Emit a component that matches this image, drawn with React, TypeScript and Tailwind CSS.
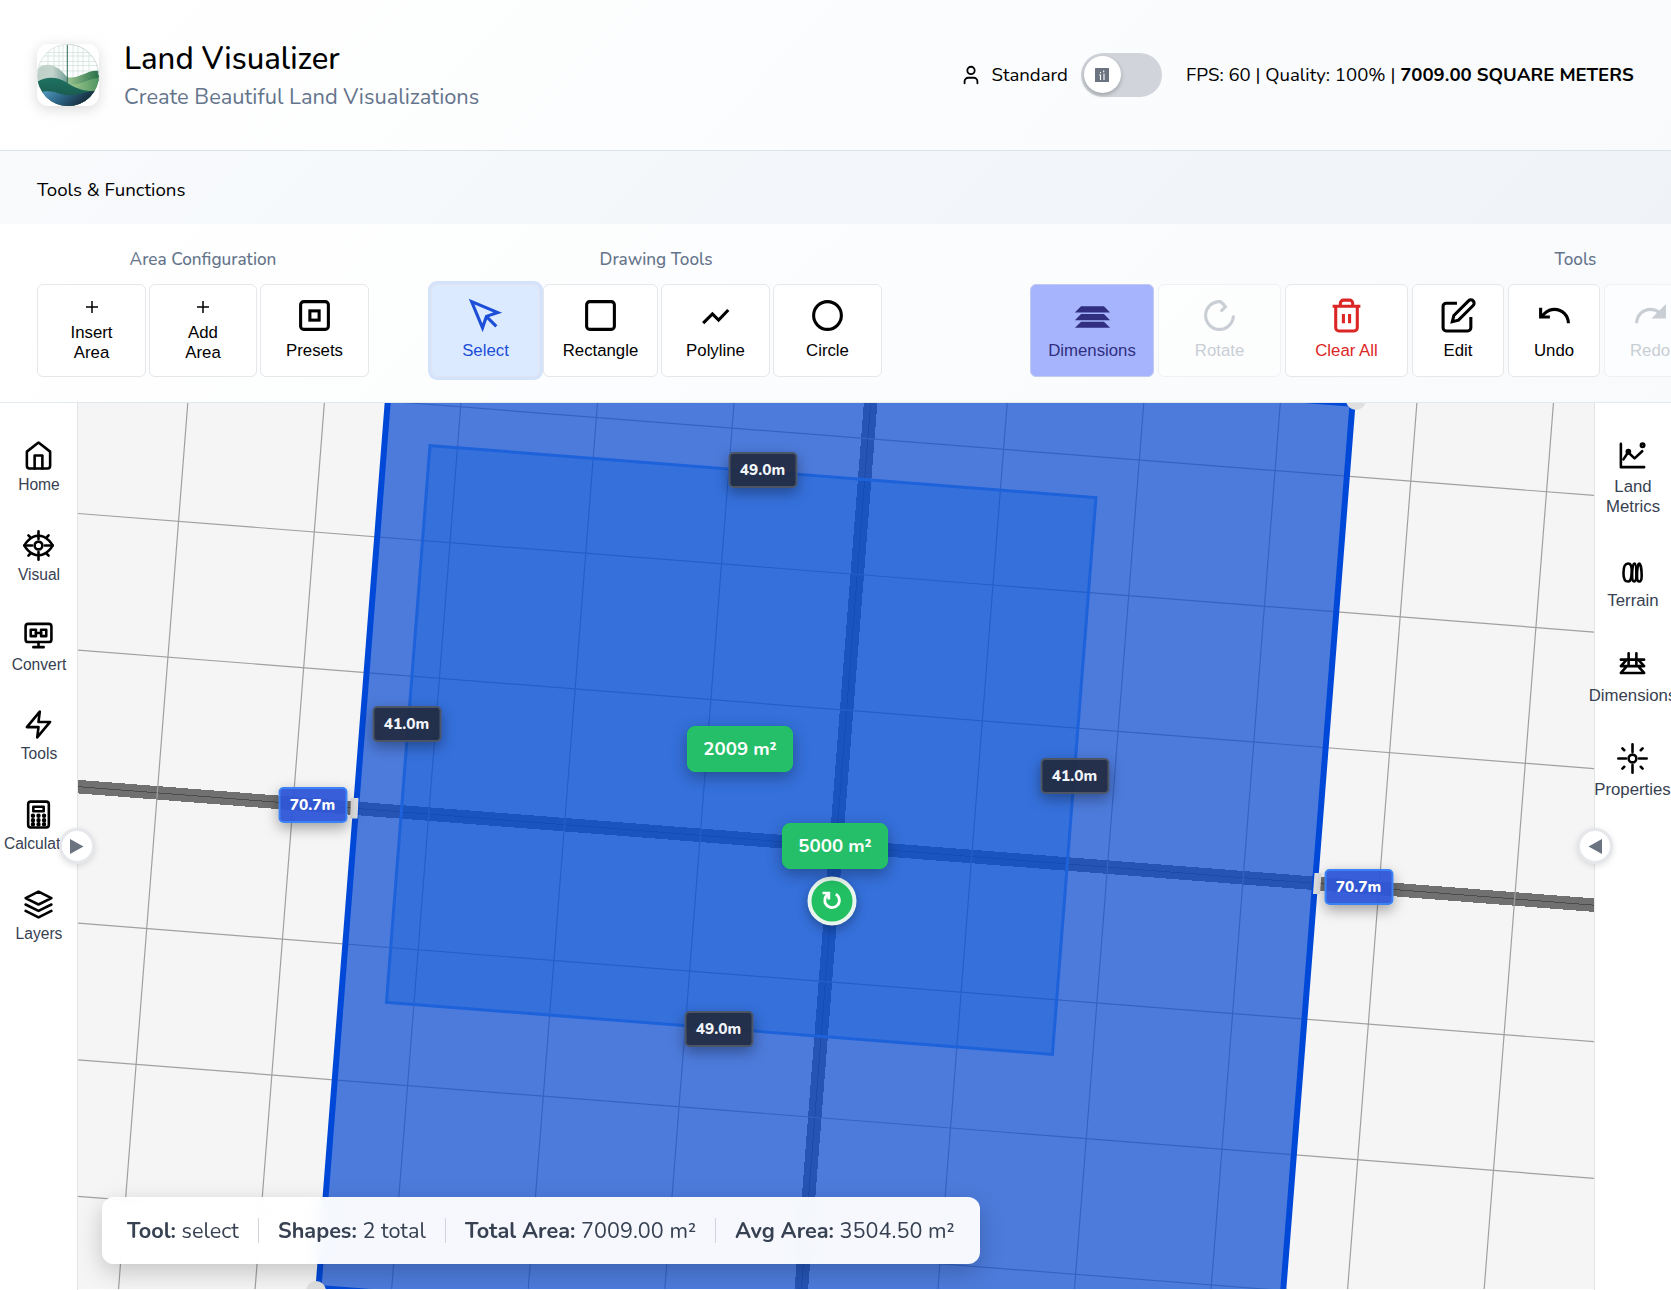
import React from "react";

type IconProps = { size?: number; className?: string; children: React.ReactNode; round?: boolean };

function Icon({ size = 37, className = "", children, round = false }: IconProps) {
  return (
    <svg
      width={size}
      height={size}
      viewBox="0 0 24 24"
      fill="none"
      stroke="currentColor"
      strokeWidth={2}
      strokeLinecap={round ? "round" : "butt"}
      strokeLinejoin={round ? "round" : "miter"}
      className={"shrink-0 " + className}
    >
      {children}
    </svg>
  );
}

function Logo() {
  return (
    <div className="h-[62px] w-[62px] overflow-hidden rounded-[11px] bg-white shadow-[0_3px_14px_rgba(0,0,0,0.15)]">
      <svg width="62" height="62" viewBox="0 0 62 62">
        <defs>
          <clipPath id="disc"><circle cx="31" cy="31" r="31" /></clipPath>
          <linearGradient id="water" x1="0" x2="1" y1="0" y2="0.3">
            <stop offset="0" stopColor="#5aa9cf" />
            <stop offset="0.5" stopColor="#2d6485" />
            <stop offset="1" stopColor="#13212f" />
          </linearGradient>
          <linearGradient id="mist" x1="0" x2="1"><stop offset="0" stopColor="#bccfc6" /><stop offset="0.5" stopColor="#c3d4cd" /><stop offset="1" stopColor="#6f9c93" /></linearGradient>
          <linearGradient id="meadow" x1="0" x2="1"><stop offset="0" stopColor="#9cc491" /><stop offset="1" stopColor="#256f48" /></linearGradient>
          <linearGradient id="field" x1="0" x2="1"><stop offset="0" stopColor="#a3cb92" /><stop offset="1" stopColor="#4f9460" /></linearGradient>
          <linearGradient id="hill" x1="0" x2="0" y1="0" y2="1"><stop offset="0" stopColor="#1f7262" /><stop offset="1" stopColor="#164f45" /></linearGradient>
        </defs>
        <g clipPath="url(#disc)">
          <rect width="62" height="62" fill="#fdfefe" />
          <path d="M0 8.5H62M0 12H62M0 17.5H62M0 21.5H62M0 27H62M11 0V30M17 0V30M22 0V30M26 0V30M36 0V35M41 0V35M46 0V35M52 0V35" stroke="#cfe0da" strokeWidth="0.7" />
          <path d="M30 33C42 36 50 25 62 27V62H30Z" fill="url(#meadow)" />
          <path d="M32 41C44 41 50 35 62 34V62H32Z" fill="url(#field)" />
          <path d="M0 25C8 19 15 20 22 25C26 28 28 31 31 34V44H0Z" fill="url(#mist)" />
          <path d="M0 38C10 32 20 33 29 38C38 44 46 48 62 47V62H0Z" fill="url(#hill)" />
          <path d="M0 49C10 46 16 47 24 50C36 54 46 48 62 46V62H0Z" fill="url(#water)" />
          <path d="M30.3 0V39" stroke="#2b6a56" strokeWidth="1" />
        </g>
        <path d="M31 0.4A30.6 30.6 0 0 1 61.6 31" fill="none" stroke="#c9d6d2" strokeWidth="0.9" />
        <path d="M31 0.4A30.6 30.6 0 0 0 0.4 31" fill="none" stroke="#dbe5e1" strokeWidth="0.9" />
      </svg>
    </div>
  );
}

function Header() {
  return (
    <header className="flex h-[151px] items-center justify-between border-b border-[#dde3eb] bg-[linear-gradient(135deg,#ffffff,#f8fafc)] px-[37px] pb-px">
      <div className="flex items-center">
        <Logo />
        <div className="ml-[25px] flex flex-col">
          <h1 className="text-[31.1px] font-medium leading-[38px] text-black"><span className="inline-block translate-y-px">Land Visualizer</span></h1>
          <p className="mt-[6px] text-[21.85px] leading-[28px] text-[#64748b]">Create Beautiful Land Visualizations</p>
        </div>
      </div>
      <div className="flex items-center text-[18.6px] text-black">
        <Icon size={22} round>
          <path d="M19 21v-2a4 4 0 0 0-4-4H9a4 4 0 0 0-4 4v2" />
          <circle cx="12" cy="7" r="4" />
        </Icon>
        <span className="ml-[9.5px] w-[77.5px] whitespace-nowrap pt-[2px]">Standard</span>
        <div className="ml-[12px] flex h-[44px] w-[81px] items-center rounded-full bg-[#d1d5db] px-[3px]">
          <div className="flex h-[37px] w-[37px] items-center justify-center rounded-full bg-white shadow-[0_2px_4px_rgba(0,0,0,0.25)]">
            <svg width="14" height="14" viewBox="0 0 14 14" className="-translate-x-px">
              <rect width="14" height="14" rx="0.5" fill="#6b7280" />
              <path d="M5.5 6.5V12M9 5.5V12M5.5 4V5.2M8.7 2.5V4.2M4.2 7H5.5" stroke="#fff" strokeWidth="1.1" />
            </svg>
          </div>
        </div>
        <span className="ml-[24px] w-[448px] whitespace-nowrap pt-[2px]">
          FPS: 60 | Quality: 100% | <b className="font-bold">7009.00 SQUARE METERS</b>
        </span>
      </div>
    </header>
  );
}

function ToolButton({ label, width, children, tone = "text-black bg-white border-[#e5e7eb]" }: { label: React.ReactNode; width: string; children: React.ReactNode; tone?: string }) {
  return (
    <button className={"flex h-[93px] shrink-0 flex-col items-center justify-center rounded-[6px] border pb-[3px] font-['Liberation_Sans',sans-serif] text-[16.8px] leading-[20px] " + width + " " + tone}>
      {children}
      <span className="mt-[7px]">{label}</span>
    </button>
  );
}

function PlusButton({ word, width }: { word: string; width: string }) {
  return (
    <button className={"flex h-[93px] shrink-0 flex-col items-center rounded-[6px] border border-[#e5e7eb] bg-white pt-[16px] font-['Liberation_Sans',sans-serif] text-[16.8px] leading-[20px] text-black " + width}>
      <svg width="12" height="12" viewBox="0 0 12 12" className="mb-[10px]">
        <path d="M6 0V12M0 6H12" stroke="#000" strokeWidth="1.5" />
      </svg>
      <span>{word}</span>
      <span>Area</span>
    </button>
  );
}

function Group({ title, className, children }: { title: string; className: string; children: React.ReactNode }) {
  return (
    <section className={"flex shrink-0 flex-col " + className}>
      <h3 className="h-[25px] pt-px text-center text-[17.2px] font-medium leading-[24px] text-[#64748b]">{title}</h3>
      <div className="mt-[12px] flex">{children}</div>
    </section>
  );
}

const FADED = "text-[#c9ced5] bg-white/50 border-[#eff1f4]";

function Ribbon() {
  return (
    <div className="flex h-[179px] overflow-hidden border-b border-[#e2e8f0] bg-[linear-gradient(135deg,#ffffff,#f8fafc)] pl-[37px] pt-[23px]">
      <Group title="Area Configuration" className="w-[332px]">
        <div className="flex gap-[3px]">
          <PlusButton word="Insert" width="w-[109px]" />
          <PlusButton word="Add" width="w-[108px]" />
          <ToolButton label="Presets" width="w-[109px]">
            <Icon><rect x="3" y="3" width="18" height="18" rx="2" /><rect x="9" y="9" width="6" height="6" /></Icon>
          </ToolButton>
        </div>
      </Group>
      <Group title="Drawing Tools" className="ml-[61px] w-[452px]">
        <div className="flex gap-[3px]">
          <ToolButton label="Select" width="ml-px w-[109px]" tone="text-[#1d4ed8] bg-[#dbeafe] border-[#dfe5f0] shadow-[0_0_0_3px_#d5e2fc]">
            <Icon><path d="M3 3l7.07 16.97 2.51-7.39 7.39-2.51L3 3z" /><path d="M13 13l6 6" /></Icon>
          </ToolButton>
          <ToolButton label="Rectangle" width="w-[115px]">
            <Icon><rect x="3" y="3" width="18" height="18" rx="2" /></Icon>
          </ToolButton>
          <ToolButton label="Polyline" width="w-[109px]">
            <Icon><path d="M4 17L10 11L14 15L20.3 8.4" /></Icon>
          </ToolButton>
          <ToolButton label="Circle" width="w-[109px]">
            <Icon><circle cx="12" cy="12" r="9" /></Icon>
          </ToolButton>
        </div>
      </Group>
      <Group title="Tools" className="ml-[148px] w-[1091px]">
        <div className="flex gap-[4px]">
          <ToolButton label="Dimensions" width="w-[124px]" tone="text-[#312e81] bg-[#a5b4fc] border-[#c3caf0]">
            <Icon><path d="M3 9l2-2h14l2 2zM3 14l2-2h14l2 2zM3 19l2-2h14l2 2z" /></Icon>
          </ToolButton>
          <ToolButton label="Rotate" width="w-[123px]" tone={FADED}>
            <Icon><path d="M21 12a9 9 0 1 1-9-9c1 0 2.3 1.2 3.8 3.4l-3 3" /></Icon>
          </ToolButton>
          <ToolButton label="Clear All" width="w-[123px]" tone="text-[#dc2626] bg-white border-[#e5e7eb]">
            <Icon><path d="M3 6h18M19 6v14a2 2 0 0 1-2 2H7a2 2 0 0 1-2-2V6M8 6V4a2 2 0 0 1 2-2h4a2 2 0 0 1 2 2v2M10 11v6M14 11v6" /></Icon>
          </ToolButton>
          <ToolButton label="Edit" width="w-[92px]">
            <Icon><path d="M11 4H4a2 2 0 0 0-2 2v14a2 2 0 0 0 2 2h14a2 2 0 0 0 2-2v-7" /><path d="M18.5 2.5a2.121 2.121 0 0 1 3 3L12 15l-4 1 1-4 9.5-9.5z" /></Icon>
          </ToolButton>
          <ToolButton label="Undo" width="w-[92px]">
            <Icon><path d="M3 7v6h6" /><path d="M21 17a9 9 0 0 0-9-9 9 9 0 0 0-6 2.3L3 13" /></Icon>
          </ToolButton>
          <ToolButton label="Redo" width="w-[92px]" tone={FADED}>
            <Icon><path d="M21 7v6h-6z" fill="currentColor" /><path d="M3 17a9 9 0 0 1 9-9 9 9 0 0 1 6 2.3L21 13" /></Icon>
          </ToolButton>
        </div>
      </Group>
    </div>
  );
}

const leftItems: { label: string; icon: React.ReactNode }[] = [
  { label: "Home", icon: <><path d="M3 9l9-7 9 7v11a2 2 0 0 1-2 2H5a2 2 0 0 1-2-2z" /><path d="M9 22V12h6v10" /></> },
  { label: "Visual", icon: <><path d="M1 12s4-7.5 11-7.5S23 12 23 12s-4 7.5-11 7.5S1 12 1 12z" /><circle cx="12" cy="12" r="3" /><path d="M12 1v6M12 17v6M1 12h6M17 12h6M4.2 4.2l1.4 1.4M18.4 18.4l1.4 1.4M4.2 19.8l1.4-1.4M18.4 5.6l1.4-1.4" /></> },
  { label: "Convert", icon: <><rect x="2" y="3" width="20" height="14" rx="2" /><path d="M12 17v4M8 21h8M10 10h4" /><rect x="6" y="7.5" width="4" height="5" /><rect x="14" y="7.5" width="4" height="5" /></> },
  { label: "Tools", icon: <path d="M13 2L3 14h9l-1 8 10-12h-9l1-8z" /> },
  { label: "Calculator", icon: <><rect x="4" y="2" width="16" height="20" rx="2" /><rect x="8" y="6" width="8" height="3.5" /><path strokeWidth="3.4" d="M7.7 13h.01M12 13h.01M16.3 13h.01M7.7 16.5h.01M12 16.5h.01M16.3 16.5h.01M7.7 19.6h.01M12 19.6h.01M16.3 19.6h.01" /></> },
  { label: "Layers", icon: <path d="M12 2L2 7l10 5 10-5-10-5zM2 17l10 5 10-5M2 12l10 5 10-5" /> },
];

function LeftBar() {
  return (
    <aside className="relative z-10 flex w-[78px] shrink-0 flex-col items-center border-r border-[#e2e4e8] bg-white pt-[37px] font-['Liberation_Sans',sans-serif] text-[15.6px] text-[#374151]">
      {leftItems.map((item) => (
        <button key={item.label} className="flex h-[89.75px] w-full flex-col items-center">
          <Icon size={31} round className="text-black">{item.icon}</Icon>
          <span className="mt-[5px] translate-x-[0.5px] leading-[18px]">{item.label}</span>
        </button>
      ))}
      <button className="absolute -right-[18px] top-[425px] flex h-[36px] w-[36px] items-center justify-center rounded-full border-[3px] border-[#e5e7eb] bg-white shadow-[0_2px_6px_rgba(0,0,0,0.12)]">
        <svg width="14" height="15" viewBox="0 0 14 15"><path d="M0 0L13.5 7.5L0 15Z" fill="#6b7280" /></svg>
      </button>
    </aside>
  );
}

function RightBar() {
  const item = "flex w-[110px] flex-col items-center";
  return (
    <aside className="relative z-10 flex w-[77px] shrink-0 flex-col items-center border-l border-[#e2e4e8] bg-white pt-[37px] font-['Liberation_Sans',sans-serif] text-[16.8px] leading-[20px] text-[#374151]">
      <button className={item + " h-[108px]"}>
        <Icon size={31} round className="-translate-x-px text-black">
          <path d="M3 3v18h18" /><path d="M5 15l3.6-5.5 5 4.7 5.9-5.5" /><circle cx="8.8" cy="9" r="1.2" /><circle cx="19.8" cy="4" r="1.3" />
        </Icon>
        <span className="mt-[6px] text-center">Land<br />Metrics</span>
      </button>
      <button className={item + " mt-[9px] h-[88px]"}>
        <Icon size={31} round className="-translate-x-px text-black">
          <path d="M8.6 5C6 5 5 9 5 12.500S6 19 8.600 19c2.400 0 2.600-3 2.800-7S11 5 8.600 5z" />
          <path d="M13.600 5c-1.400 0-1.900 5-1.900 9s.6 5 1.600 5 1.700-1 1.700-5-.2-9-1.400-9z" />
          <path d="M17.200 5c1.200 0 1.900 6 1.900 9.500s-.7 4.500-1.900 4.500-1.700-1-1.700-4.500.5-9.500 1.700-9.500z" />
        </Icon>
        <span className="mt-[3px]">Terrain</span>
      </button>
      <button className={item + " mt-[3px] h-[88px]"}>
        <Icon size={31} round className="-translate-x-px text-black">
          <path d="M3 9h18M3 14h18M3 19.3h18M3 14l4-4.5M21 14l-4-4.5M3 19.3l4-4.5M21 19.3l-4-4.5M9 4v9M15 4v9" />
        </Icon>
        <span className="mt-[7px] -translate-x-[0.5px]">Dimensions</span>
      </button>
      <button className={item + " mt-[7px] h-[60px]"}>
        <Icon size={31} round className="-translate-x-px text-black">
          <circle cx="12" cy="12" r="3" /><path d="M12 1v6M12 17v6M1 12h6M17 12h6M4.2 4.2l1.4 1.4M18.4 18.4l1.4 1.4M4.2 19.8l1.4-1.4M18.4 5.6l1.4-1.4" />
        </Icon>
        <span className="mt-[6px] -translate-x-[0.5px]">Properties</span>
      </button>
      <button className="absolute -left-[18px] top-[425px] flex h-[36px] w-[36px] items-center justify-center rounded-full border-[3px] border-[#e5e7eb] bg-white shadow-[0_2px_6px_rgba(0,0,0,0.12)]">
        <svg width="14" height="15" viewBox="0 0 14 15"><path d="M14 0L0.5 7.5L14 15Z" fill="#6b7280" /></svg>
      </button>
    </aside>
  );
}

const CELL = 136.15;
const lines = [-8, -7, -6, -5, -4, -3, -2, -1, 1, 2, 3, 4, 5, 6, 7, 8];

function Scene() {
  return (
    <svg className="block h-full w-full" viewBox="78 403 1516 886">
      <rect x="78" y="403" width="1516" height="886" fill="#f5f5f5" />
      <g transform="translate(836 845.9) rotate(4.47)">
        <g shapeRendering="crispEdges">
          <path d="M-1100 0H1100M0 -1100V1100" stroke="#707070" strokeWidth="13.5" />
          <path d="M-1100 0H1100M0 -1100V1100" stroke="#4c4c4c" strokeWidth="1" />
        </g>
        {lines.map((i) => (
          <path key={i} d={`M${i * CELL} -1100V1100M-1100 ${i * CELL}H1100`} stroke="#a0a0a0" strokeWidth="1.2" />
        ))}
        <rect x="-481.5" y="-481" width="962" height="962" fill="#0949d1" fillOpacity="0.71" />
        <rect x="-436" y="-367.5" width="668" height="558.5" fill="#0056db" fillOpacity="0.3" stroke="#1d62da" strokeWidth="3" />
        <rect x="-481.5" y="-481" width="962" height="962" fill="none" stroke="#0048d8" strokeWidth="6" />
      </g>
      <g fill="#e0e0e0">
        <circle cx="1356" cy="400" r="10" />
        <circle cx="316" cy="1291" r="10" />
        <path d="M351 798h7.5l-1 20.5h-7.5zM1314.5 873h7l-1.5 21h-7z" />
      </g>
    </svg>
  );
}

const DIM_BOX =
  "absolute flex h-[36px] w-[69px] -translate-x-1/2 -translate-y-1/2 items-center justify-center rounded-[5px] border-[2.5px] text-[15.4px] font-extrabold shadow-[0_5px_14px_rgba(0,0,0,0.35)] ";

function Dim({ children, pos }: { children: string; pos: string }) {
  return <div className={DIM_BOX + "border-[#4b5566] bg-[#222c44]/95 text-[#f1f5f9] " + pos}>{children}</div>;
}

function Edge({ children, pos }: { children: string; pos: string }) {
  return <div className={DIM_BOX + "border-[#3b82f6] bg-[#2d55d8]/95 text-white " + pos}>{children}</div>;
}

function Area({ children, pos }: { children: string; pos: string }) {
  return (
    <div className={"absolute flex h-[46px] w-[106px] -translate-x-1/2 -translate-y-1/2 items-center justify-center rounded-[8px] border border-[#22c55e] bg-[#25bf69] pt-px text-[18.7px] font-bold text-white shadow-[0_5px_16px_rgba(0,0,0,0.32)] " + pos}>
      {children}
    </div>
  );
}

function Stat({ name, value, width }: { name: string; value: string; width: string }) {
  return (
    <span className={"whitespace-nowrap pt-[2px] " + width}>
      <b className="font-bold">{name}</b> {value}
    </span>
  );
}

function Canvas() {
  const divider = <span className="mr-[19px] h-[25px] w-px bg-[#d1d5db]" />;
  return (
    <main className="relative h-[886px] min-w-0 flex-1 overflow-hidden">
      <Scene />
      <Dim pos="left-[684.5px] top-[67px]">49.0m</Dim>
      <Dim pos="left-[328.5px] top-[321px]">41.0m</Dim>
      <Dim pos="left-[996.5px] top-[373px]">41.0m</Dim>
      <Dim pos="left-[640.5px] top-[626px]">49.0m</Dim>
      <Edge pos="left-[234.5px] top-[402px]">70.7m</Edge>
      <Edge pos="left-[1280.5px] top-[484px]">70.7m</Edge>
      <Area pos="left-[662px] top-[346px]">2009 m²</Area>
      <div className="absolute left-[753.5px] top-[497.5px] flex h-[49px] w-[49px] -translate-x-1/2 -translate-y-1/2 items-center justify-center rounded-full border-4 border-[#e9f6ee] bg-[#22c063] shadow-[0_4px_12px_rgba(0,0,0,0.3)]">
        <svg width="20" height="18" viewBox="0 0 20 18" fill="none" stroke="#fff" strokeWidth="2.8">
          <path d="M7.3 8V1.4H1M7 2.5A7.3 7.3 0 1 0 14.3 2.6" />
        </svg>
      </div>
      <Area pos="left-[757px] top-[443px]">5000 m²</Area>
      <div className="absolute left-[24px] top-[794px] flex h-[67px] w-[878px] items-center rounded-[12px] bg-white/95 pl-[25px] text-[21.65px] text-[#374151] shadow-[0_8px_24px_rgba(0,0,0,0.2)] backdrop-blur-sm">
        <Stat name="Tool:" value="select" width="w-[131px]" />
        {divider}
        <Stat name="Shapes:" value="2 total" width="w-[167px]" />
        {divider}
        <Stat name="Total Area:" value="7009.00 m²" width="w-[250px]" />
        {divider}
        <Stat name="Avg Area:" value="3504.50 m²" width="w-[230px]" />
      </div>
    </main>
  );
}

export default function App() {
  return (
    <div className="flex h-[1290px] w-[1671px] flex-col overflow-hidden bg-white font-[Nunito,Lato,sans-serif]">
      <Header />
      <div className="flex h-[73px] shrink-0 items-center bg-[linear-gradient(135deg,#f8fafc,#eff3f8)] px-[37px] pt-[5px] text-[18.7px] text-black">
        Tools &amp; Functions
      </div>
      <Ribbon />
      <div className="flex h-[887px]">
        <LeftBar />
        <Canvas />
        <RightBar />
      </div>
    </div>
  );
}
